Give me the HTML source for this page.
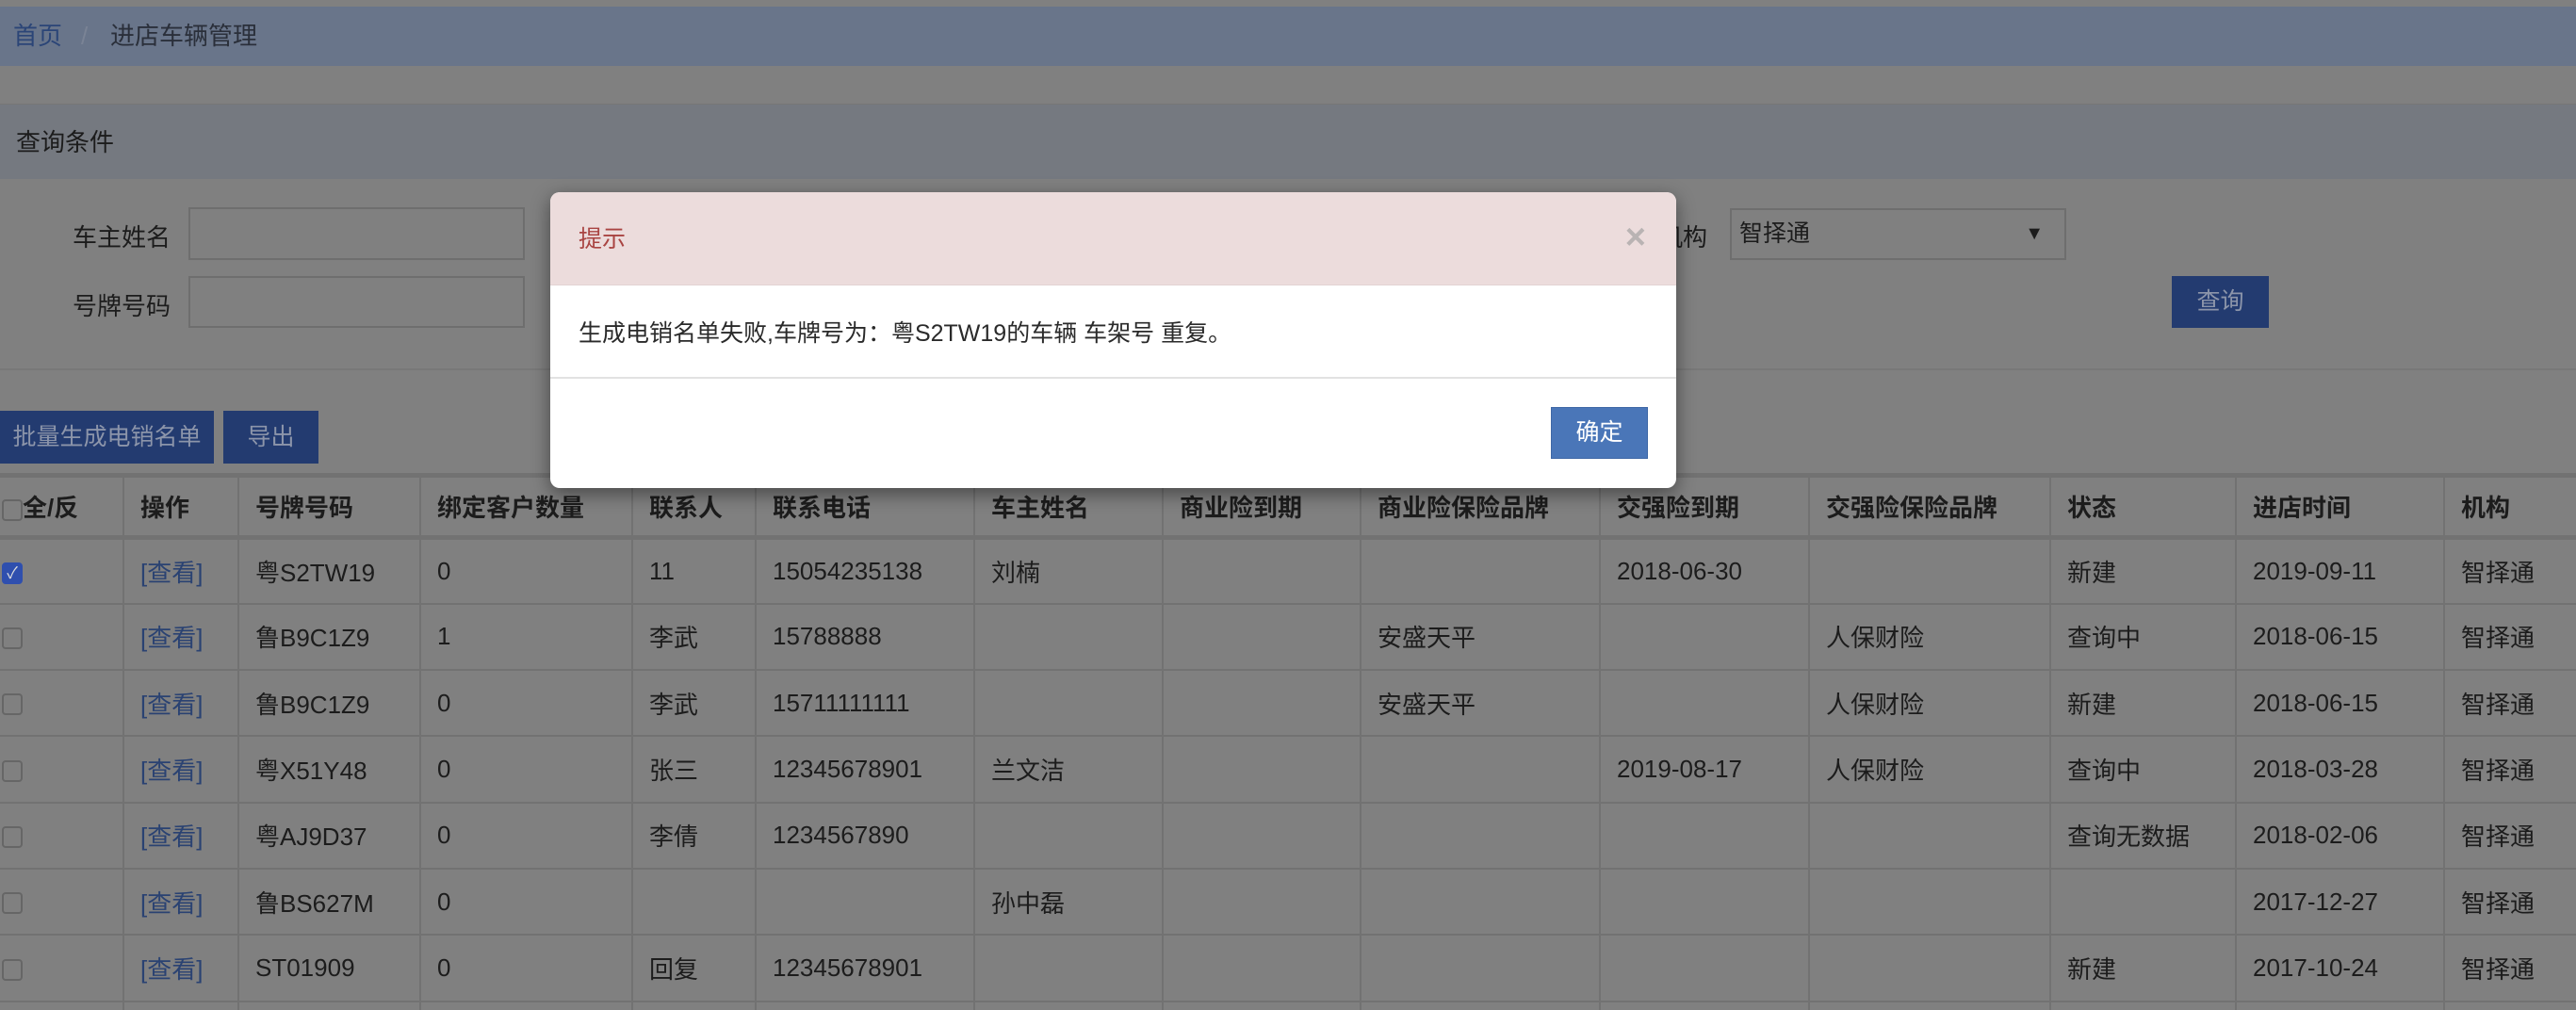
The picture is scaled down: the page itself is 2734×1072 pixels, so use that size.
<!DOCTYPE html>
<html style="width:2734px;height:1072px;overflow:hidden"><head><meta charset="utf-8"><style>
*{margin:0;padding:0;box-sizing:border-box}
body{width:2734px;height:1072px;overflow:hidden;background:#808080;font-family:"Liberation Sans","Noto Sans CJK SC",sans-serif;color:#1c1c1c;position:relative}
.abs{position:absolute}
.bar{left:0;top:7px;width:2734px;height:63px;background:#69758a;font-size:26px;line-height:63px}
.ph{left:0;top:110px;width:2734px;height:80px;background:#757980;font-size:26px;line-height:80px;padding-left:17px;border-top:1px solid #767676}
.pb{left:0;top:190px;width:2734px;height:203px;border-bottom:2px solid #787878}
.lbl{font-size:26px;line-height:54px}
.inp{border:2px solid #6e6e6e;background:#808080}
.btn{background:#233b70;color:#8c95aa;font-size:25px;text-align:center}
.tw{position:absolute;left:0;top:502px;width:2734px;height:570px;overflow:hidden}
table{border-collapse:collapse;table-layout:fixed;width:2734px;font-size:26px}
td,th{border:2px solid #727272;height:70.3px;padding-left:17px;text-align:left;vertical-align:middle;white-space:nowrap;overflow:hidden}
th{font-weight:bold;height:66px;border-bottom:5px solid #727272;border-top:5px solid #727272}
td:first-child,th:first-child{border-left:none;padding-left:2px}
td:last-child,th:last-child{border-right:none}
.lk{color:#2a4272}
.cb{display:inline-block;width:22px;height:23px;border:2px solid #666;border-radius:4px;vertical-align:middle;background:#808080}
.cb.on{background:#2f4fae;border-color:#2f4fae;color:#ddd;font-size:17px;line-height:19px;text-align:center}
.dlg{left:584px;top:204px;width:1195px;height:314px;background:#fff;border-radius:10px;overflow:hidden;box-shadow:0 6px 20px rgba(0,0,0,.45)}
</style></head><body>
<div class="abs bar"><span style="position:absolute;left:14px;color:#2b4577">首页</span><span style="position:absolute;left:86px;color:#7a8395">/</span><span style="position:absolute;left:117px;color:#2a2f3a">进店车辆管理</span></div>
<div class="abs ph">查询条件</div>
<div class="abs pb"></div>
<div class="abs lbl" style="left:77px;top:225px">车主姓名</div>
<div class="abs inp" style="left:200px;top:220px;width:357px;height:56px"></div>
<div class="abs lbl" style="left:77px;top:298px">号牌号码</div>
<div class="abs inp" style="left:200px;top:293px;width:357px;height:55px"></div>
<div class="abs lbl" style="left:1760px;top:225px">机构</div>
<div class="abs inp" style="left:1836px;top:221px;width:357px;height:55px;font-size:25px;line-height:50px;padding-left:8px">智择通<span style="position:absolute;right:22px;font-size:20px">▼</span></div>
<div class="abs btn" style="left:2305px;top:293px;width:103px;height:55px;line-height:55px">查询</div>
<div class="abs btn" style="left:0;top:436px;width:227px;height:56px;line-height:56px">批量生成电销名单</div>
<div class="abs btn" style="left:237px;top:436px;width:101px;height:56px;line-height:56px">导出</div>
<div class="tw"><table>
<colgroup><col style="width:131px"><col style="width:122px"><col style="width:193px"><col style="width:225px"><col style="width:131px"><col style="width:232px"><col style="width:200px"><col style="width:210px"><col style="width:254px"><col style="width:222px"><col style="width:256px"><col style="width:197px"><col style="width:221px"><col style="width:140px"></colgroup>
<tr><th><span class="cb"></span>全/反</th><th>操作</th><th>号牌号码</th><th>绑定客户数量</th><th>联系人</th><th>联系电话</th><th>车主姓名</th><th>商业险到期</th><th>商业险保险品牌</th><th>交强险到期</th><th>交强险保险品牌</th><th>状态</th><th>进店时间</th><th>机构</th></tr>
<tr><td><span class="cb on">✓</span></td><td class="lk">[查看]</td><td>粤S2TW19</td><td>0</td><td>11</td><td>15054235138</td><td>刘楠</td><td></td><td></td><td>2018-06-30</td><td></td><td>新建</td><td>2019-09-11</td><td>智择通</td></tr>
<tr><td><span class="cb"></span></td><td class="lk">[查看]</td><td>鲁B9C1Z9</td><td>1</td><td>李武</td><td>15788888</td><td></td><td></td><td>安盛天平</td><td></td><td>人保财险</td><td>查询中</td><td>2018-06-15</td><td>智择通</td></tr>
<tr><td><span class="cb"></span></td><td class="lk">[查看]</td><td>鲁B9C1Z9</td><td>0</td><td>李武</td><td>15711111111</td><td></td><td></td><td>安盛天平</td><td></td><td>人保财险</td><td>新建</td><td>2018-06-15</td><td>智择通</td></tr>
<tr><td><span class="cb"></span></td><td class="lk">[查看]</td><td>粤X51Y48</td><td>0</td><td>张三</td><td>12345678901</td><td>兰文洁</td><td></td><td></td><td>2019-08-17</td><td>人保财险</td><td>查询中</td><td>2018-03-28</td><td>智择通</td></tr>
<tr><td><span class="cb"></span></td><td class="lk">[查看]</td><td>粤AJ9D37</td><td>0</td><td>李倩</td><td>1234567890</td><td></td><td></td><td></td><td></td><td></td><td>查询无数据</td><td>2018-02-06</td><td>智择通</td></tr>
<tr><td><span class="cb"></span></td><td class="lk">[查看]</td><td>鲁BS627M</td><td>0</td><td></td><td></td><td>孙中磊</td><td></td><td></td><td></td><td></td><td></td><td>2017-12-27</td><td>智择通</td></tr>
<tr><td><span class="cb"></span></td><td class="lk">[查看]</td><td>ST01909</td><td>0</td><td>回复</td><td>12345678901</td><td></td><td></td><td></td><td></td><td></td><td>新建</td><td>2017-10-24</td><td>智择通</td></tr>
<tr><td></td><td></td><td></td><td></td><td></td><td></td><td></td><td></td><td></td><td></td><td></td><td></td><td></td><td></td></tr>
</table></div>
<div class="abs dlg">
<div style="position:absolute;left:0;top:0;width:100%;height:99px;background:#ecdcdc;border-bottom:1px solid #e3d3d3"></div>
<div style="position:absolute;left:30px;top:28px;font-size:25px;line-height:44px;color:#a94442">提示</div>
<div style="position:absolute;right:32px;top:26px;font-size:38px;line-height:44px;color:#b9b3b3;font-weight:bold">×</div>
<div style="position:absolute;left:30px;top:128px;font-size:25px;line-height:44px;color:#2a2a2a">生成电销名单失败,车牌号为：粤S2TW19的车辆 车架号 重复。</div>
<div style="position:absolute;left:0;top:196px;width:100%;height:2px;background:#e2e2e2"></div>
<div style="position:absolute;left:1062px;top:228px;width:103px;height:55px;background:#4a76b8;border:1px solid #3e67a6;color:#fff;font-size:25px;line-height:53px;text-align:center">确定</div>
</div>
</body></html>
